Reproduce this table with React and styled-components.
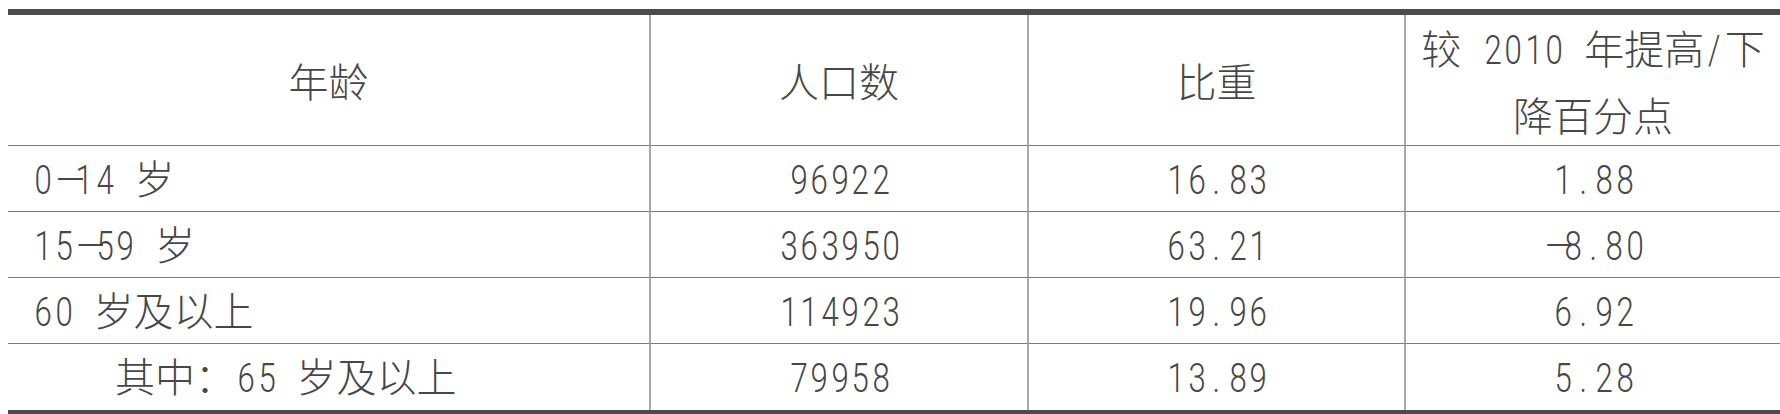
import styled, { createGlobalStyle } from 'styled-components'

const GlobalStyle = createGlobalStyle`
	html, body {
		margin: 0;
		padding: 0;
		background: #fff;
	}
`

const columns = ['641px', '378px', '377px', '376px']

const head = [['年龄'], ['人口数'], ['比重'], ['较 2010 年提高/下', '降百分点']]

const rows = [
	{ label: '0—14 岁', values: ['96922', '16.83', '1.88'] },
	{ label: '15—59 岁', values: ['363950', '63.21', '—8.80'] },
	{ label: '60 岁及以上', values: ['114923', '19.96', '6.92'] },
	{ label: '其中：65 岁及以上', values: ['79958', '13.89', '5.28'], indent: true },
]

// half-width characters sit in fixed cells like the table's original font,
// the long dash runs over into the next digit
const renderText = (str) =>
	Array.from(str).map((ch, i) => {
		if (ch === '—')
			return (
				<DashCell key={i}>
					<DashGlyph>—</DashGlyph>
				</DashCell>
			)
		if (/[0-9./ ]/.test(ch)) return <Half key={i}>{ch === ' ' ? '\u00a0' : ch}</Half>
		return <span key={i}>{ch}</span>
	})

const App = () => {
	return (
		<Page>
			<GlobalStyle />
			<Table>
				{head.map((lines, c) => (
					<HeadCell key={c} $first={c === 0}>
						<HeadText>
							{lines.map((line, j) => (
								<div key={j}>{renderText(line)}</div>
							))}
						</HeadText>
					</HeadCell>
				))}
				{rows.map((row, r) => {
					const last = r === rows.length - 1
					return [
						<Cell key={r + '-0'} $first $last={last} $indent={row.indent}>
							<CellText>{renderText(row.label)}</CellText>
						</Cell>,
						...row.values.map((v, c) => (
							<Cell key={r + '-' + (c + 1)} $last={last}>
								<CellText>{renderText(v)}</CellText>
							</Cell>
						)),
					]
				})}
			</Table>
		</Page>
	)
}

const Page = styled.div`
	width: 1780px;
	height: 414px;
	padding: 9px 0 0 8px;
	box-sizing: border-box;
	overflow: hidden;
	background: #fff;
	font-family: 'Noto Sans CJK SC', sans-serif;
	font-weight: 300;
	font-size: 40px;
	color: #474747;
`

const Table = styled.div`
	display: grid;
	grid-template-columns: ${columns.join(' ')};
	width: 1772px;
	border-top: 6px solid #4b4b4b;
	border-bottom: 6px solid #4b4b4b;
`

const HeadCell = styled.div`
	box-sizing: border-box;
	height: 131px;
	display: flex;
	align-items: center;
	justify-content: center;
	border-bottom: 1px solid #7c7c7c;
	border-left: ${(p) => (p.$first ? 'none' : '2px solid #a8a8a8')};
`

const HeadText = styled.div`
	text-align: center;
	line-height: 64px;
	white-space: nowrap;
`

const Cell = styled.div`
	box-sizing: border-box;
	height: 66px;
	display: flex;
	align-items: center;
	justify-content: ${(p) => (p.$first ? 'flex-start' : 'center')};
	padding-left: ${(p) => (p.$first ? (p.$indent ? '107px' : '24px') : '0')};
	border-bottom: ${(p) => (p.$last ? 'none' : '1px solid #7c7c7c')};
	border-left: ${(p) => (p.$first ? 'none' : '2px solid #a8a8a8')};
`

const CellText = styled.div`
	white-space: nowrap;
	line-height: 1;
`

const Half = styled.span`
	display: inline-block;
	width: 20.5px;
	text-align: center;
	font-family: Roboto, 'Liberation Sans', sans-serif;
	font-weight: 300;
	font-size: 41px;
	transform: scaleX(0.76);
`

const DashCell = styled.span`
	display: inline-block;
	width: 20.5px;
	font-family: Roboto, 'Liberation Sans', sans-serif;
	font-weight: 300;
	font-size: 41px;
	overflow: visible;
	white-space: nowrap;
`

const DashGlyph = styled.span`
	display: inline-block;
	width: 27px;
	margin-left: 3px;
	overflow: hidden;
	vertical-align: bottom;
`

export default App
